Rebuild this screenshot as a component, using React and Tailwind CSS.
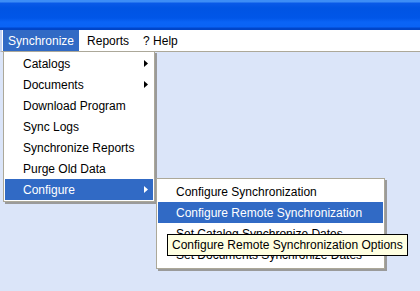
function Arrow({ white }) {
  return (
    <svg width="4" height="7" viewBox="0 0 4 7" className="shrink-0">
      <path d="M0 0 L4 3.5 L0 7 Z" fill={white ? "#ffffff" : "#000000"} />
    </svg>
  );
}

function MenuItem({ label, active, sub }) {
  return (
    <div
      className={`h-[21px] flex items-center justify-between pl-[18px] pr-[5px] ${
        active ? "bg-[#316ac5] text-white" : "text-black"
      }`}
    >
      <span>{label}</span>
      {sub && <Arrow white={active} />}
    </div>
  );
}

const mainItems = [
  { label: "Catalogs", sub: true },
  { label: "Documents", sub: true },
  { label: "Download Program" },
  { label: "Sync Logs" },
  { label: "Synchronize Reports" },
  { label: "Purge Old Data" },
  { label: "Configure", sub: true, active: true },
];

const subItems = [
  { label: "Configure Synchronization" },
  { label: "Configure Remote Synchronization", active: true },
  { label: "Set Catalog Synchronize Dates" },
  { label: "Set Documents Synchronize Dates" },
];

export default function App() {
  return (
    <div
      className="relative w-[420px] h-[291px] overflow-hidden bg-[#dbe5f9] text-[12px] leading-none"
      style={{ fontFamily: '"Liberation Sans", Arial, sans-serif' }}
    >
      {/* title bar */}
      <div className="h-[30px] bg-[linear-gradient(to_bottom,#3d8df6_0px,#3d8df6_2px,#0a5ae8_3px,#0054e3_8px,#0056e8_18px,#0a64f6_22px,#0a63f5_27px,#0046cc_28px,#0043c4_30px)]" />

      {/* menu bar */}
      <div className="h-[22px] flex bg-white border-b border-[#aca899] border-l-[2px] border-l-[#c4d3f2]">
        <div className="h-[21px] px-[5px] flex items-center bg-[#316ac5] text-white ml-[1px]">
          Synchronize
        </div>
        <div className="h-[21px] px-[8px] flex items-center text-black">Reports</div>
        <div className="h-[21px] px-[6px] flex items-center text-black">? Help</div>
      </div>

      {/* dropdown menu */}
      <div className="absolute left-[3px] top-[51px] w-[152px] bg-white border border-[#aca899] shadow-[2px_2px_0_#9a9a9a] p-[1px]">
        {mainItems.map((it) => (
          <MenuItem key={it.label} {...it} />
        ))}
      </div>

      {/* submenu */}
      <div className="absolute left-[156px] top-[178px] w-[229px] bg-white border border-[#aca899] shadow-[2px_2px_0_#9a9a9a] pt-[2px] pb-[3px] px-[1px]">
        {subItems.map((it) => (
          <MenuItem key={it.label} {...it} />
        ))}
      </div>

      {/* tooltip */}
      <div className="absolute left-[167px] top-[234px] h-[22px] px-[4px] flex items-center bg-[#ffffe1] border border-black text-black whitespace-nowrap">
        Configure Remote Synchronization Options
      </div>
    </div>
  );
}
